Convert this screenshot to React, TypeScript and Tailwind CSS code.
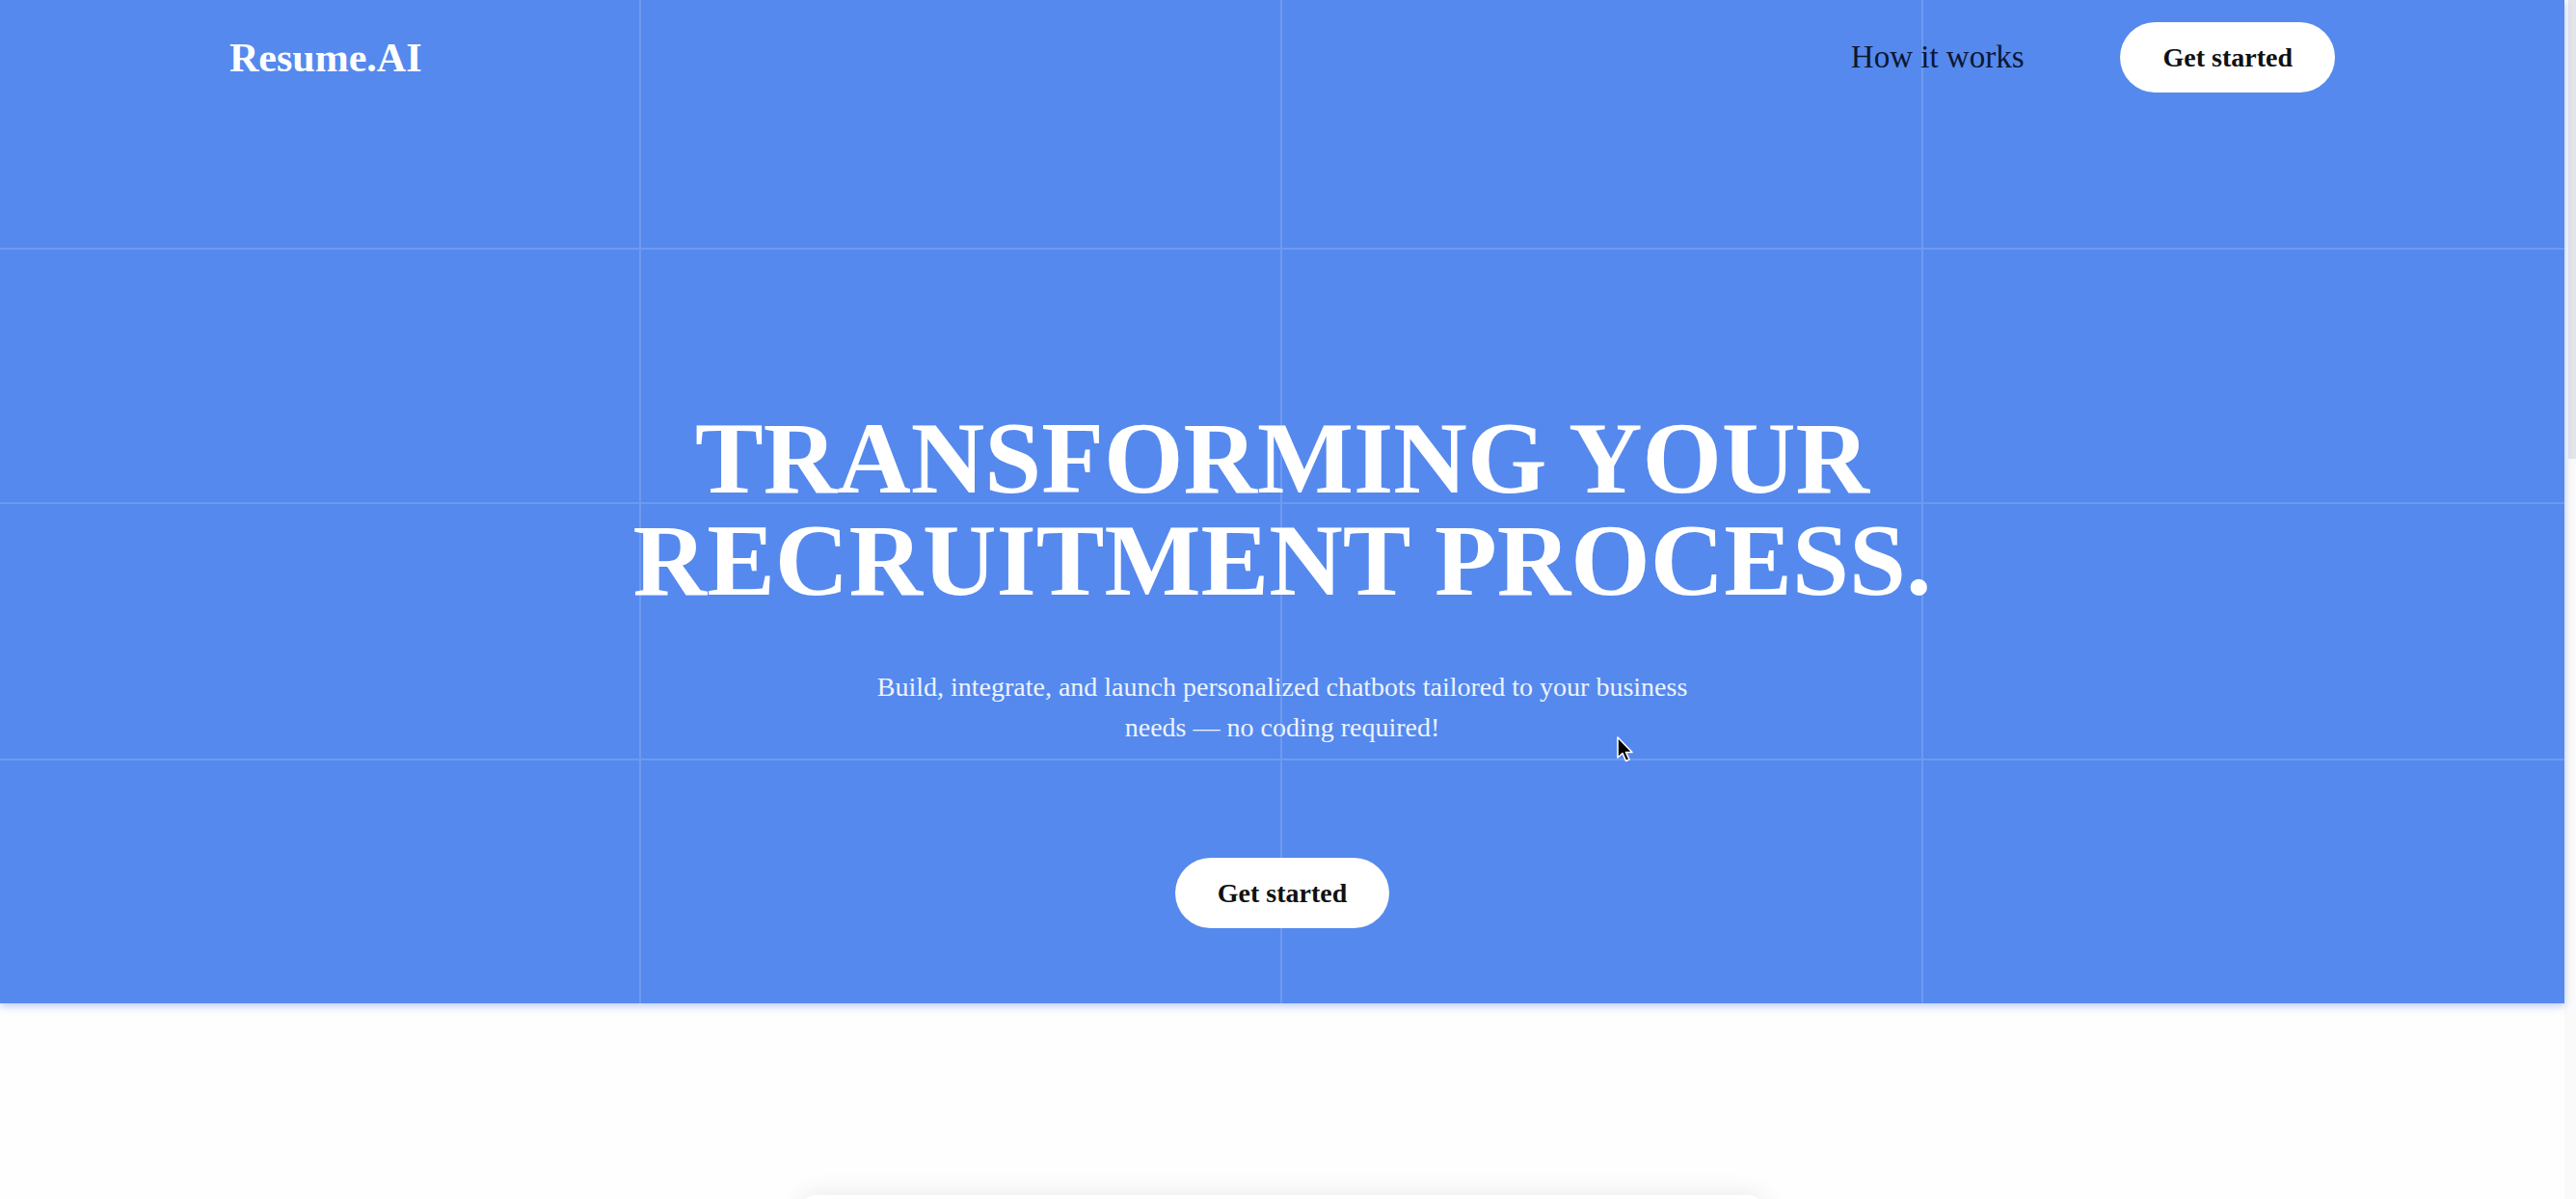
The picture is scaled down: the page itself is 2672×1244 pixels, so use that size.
import React from 'react';

const serif = { fontFamily: '"Liberation Serif", "Times New Roman", serif' };

const GridOverlay: React.FC = () => {
  const cells = Array.from({ length: 16 });
  return (
    <div
      aria-hidden
      className="pointer-events-none absolute inset-0 grid grid-cols-4 grid-rows-[259px_264px_266px_1fr]"
    >
      {cells.map((_, i) => {
        const lastCol = i % 4 === 3;
        const lastRow = i >= 12;
        return (
          <div
            key={i}
            className={`${lastCol ? '' : 'border-r-2'} ${lastRow ? '' : 'border-b-2'} border-white/15`}
          />
        );
      })}
    </div>
  );
};

const Cursor: React.FC = () => (
  <svg
    className="pointer-events-none absolute left-[1676px] top-[764px] h-[28px] w-[20px]"
    viewBox="0 0 20 28"
  >
    <path
      d="M2 1 L2 22 L7 17.5 L10.5 25.5 L14 24 L10.5 16.5 L17 16.5 Z"
      fill="#000"
      stroke="#fff"
      strokeWidth="1.6"
      strokeLinejoin="round"
    />
  </svg>
);

const PillButton: React.FC<{ className?: string }> = ({ className = '' }) => (
  <button
    className={`flex h-[73px] items-center justify-center rounded-full bg-white px-[44px] text-[28px] font-bold leading-none text-[#111] ${className}`}
  >
    Get started
  </button>
);

export default function App() {
  return (
    <div className="flex h-screen w-full overflow-hidden bg-white" style={serif}>
      <main className="relative flex-1">
        {/* hero */}
        <section className="relative h-[1041px] bg-[#5589ed] shadow-[0_3px_8px_rgba(60,110,215,0.35)]">
          <GridOverlay />

          <div className="relative flex h-full flex-col">
            <nav className="flex h-[119px] items-center justify-between px-[238px]">
              <a className="text-[42px] font-bold leading-none text-white">Resume.AI</a>
              <div className="flex items-center gap-[100px]">
                <a className="text-[33px] leading-none text-[#0c1733]">How it works</a>
                <PillButton />
              </div>
            </nav>

            <div className="flex flex-col items-center pt-[304px]">
              <h1 className="text-center text-[106px] font-bold leading-[106px] text-white">
                TRANSFORMING YOUR
                <br />
                RECRUITMENT PROCESS.
              </h1>
              <p className="mt-[57px] max-w-[880px] text-center text-[28px] leading-[42px] text-white/90">
                Build, integrate, and launch personalized chatbots tailored to your business needs — no coding required!
              </p>
              <PillButton className="mt-[114px] h-[71px]" />
            </div>
          </div>

          <Cursor />
        </section>

        {/* next section, cut off by the viewport */}
        <section className="flex justify-center bg-[#fefefe] pt-[199px]">
          <div className="h-[420px] w-[1000px] rounded-2xl bg-white shadow-[0_0_28px_rgba(0,0,0,0.09)]" />
        </section>
      </main>

      {/* scrollbar */}
      <aside className="flex w-[12px] justify-end bg-[#fafafa]">
        <div className="h-[476px] w-[8px] bg-[#e4e4ea]" />
      </aside>
    </div>
  );
}
